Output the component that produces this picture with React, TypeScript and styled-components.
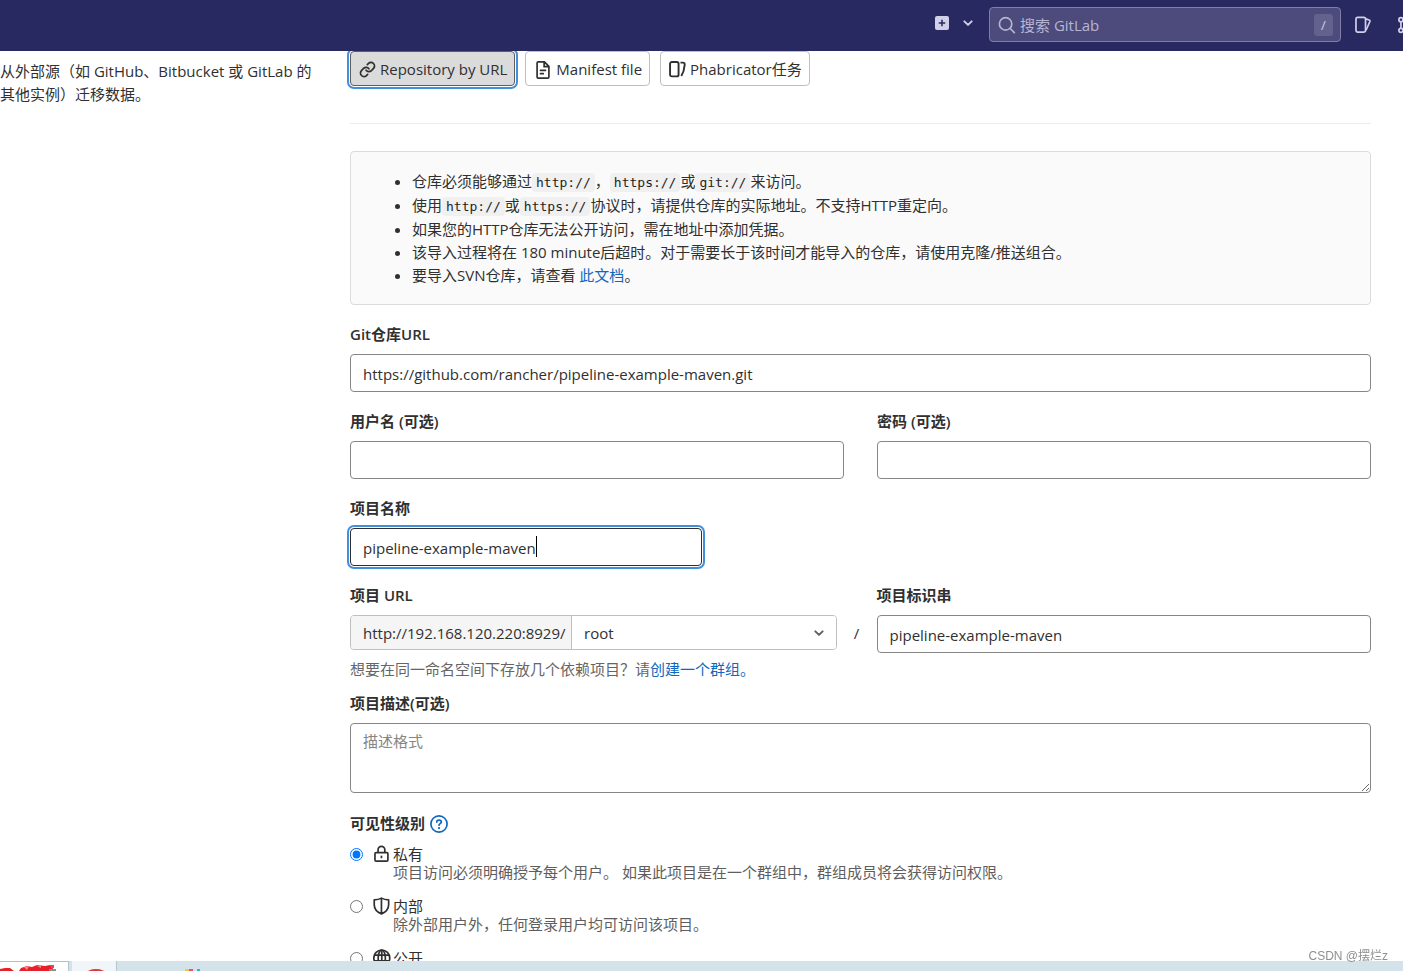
import React from "react";
import styled, { createGlobalStyle, css } from "styled-components";

const GlobalStyle = createGlobalStyle`
  *, *::before, *::after { box-sizing: border-box; }
  body {
    margin: 0;
    background: #fff;
    color: #303030;
    font: 400 15px/23px "Open Sans", "Noto Sans CJK SC", sans-serif;
  }
  button, input, select, textarea { font: inherit; color: inherit; margin: 0; }
  svg { display: block; flex: none; }
`;

const Page = styled.div`
  display: flex;
  flex-direction: column;
  height: 100vh;
  overflow: hidden;
`;

/* ---------- top bar ---------- */

const TopBar = styled.header`
  flex: none;
  display: flex;
  align-items: center;
  justify-content: flex-end;
  height: 51px;
  padding-bottom: 2px;
  overflow: hidden;
  background: #292961;
  color: #d1d0e8;
`;

const NavButton = styled.button<{ $gap?: number }>`
  display: flex;
  align-items: center;
  gap: 9px;
  margin-right: ${(p) => p.$gap ?? 0}px;
  padding: 0;
  border: 0;
  background: none;
  color: #d1d0e8;
`;

const CreateButton = styled(NavButton)`
  padding-bottom: 4px;
`;

const SearchBox = styled.label`
  display: flex;
  align-items: center;
  width: 352px;
  height: 35px;
  margin-right: 13px;
  padding: 0 7px 0 8px;
  border: 1px solid #7f7ea9;
  border-radius: 4px;
  background: #4c4b7c;
  color: #b6b5d3;
`;

const SearchInput = styled.input`
  flex: 1;
  min-width: 0;
  padding: 1px 4px 0;
  border: 0;
  outline: 0;
  background: none;
  &::placeholder { color: #b6b5d3; opacity: 1; }
`;

const Shortcut = styled.kbd`
  width: 19px;
  border-radius: 3px;
  background: #63628f;
  color: #d1d0e8;
  font: 13px/22px "Open Sans", sans-serif;
  text-align: center;
`;

const ClippedNav = styled(NavButton)`
  flex: none;
  margin-right: -12px;
`;

/* ---------- page body ---------- */

const Main = styled.main`
  flex: 1;
  min-height: 0;
  display: grid;
  grid-template-columns: 318px minmax(0, 1fr);
  column-gap: 32px;
  padding-right: 32px;
  overflow: hidden;
`;

const Intro = styled.p`
  margin: 9px 0 0;
`;

const Form = styled.form`
  display: flex;
  flex-direction: column;
`;

const SourceButtons = styled.div`
  display: flex;
  gap: 10px;
  padding-bottom: 37px;
  border-bottom: 1px solid #ececec;
`;

const focusRing = css`
  box-shadow: 0 0 0 1px #fff, 0 0 0 3px #428fdc;
`;

const SourceButton = styled.button<{ $selected?: boolean }>`
  display: flex;
  align-items: center;
  gap: 4px;
  height: 35px;
  padding: 2px 7px 0 8px;
  border: 1px solid #bfbfbf;
  border-radius: 4px;
  background: #fff;
  white-space: nowrap;
  ${(p) =>
    p.$selected &&
    css`
      border-color: #5e5e5e;
      background: #dbdbdb;
      ${focusRing}
    `}
`;

const Notice = styled.section`
  margin-top: 27px;
  padding: 18px 18px 17px;
  border: 1px solid #dbdbdb;
  border-radius: 4px;
  background: #fafafa;
`;

const NoticeList = styled.ul`
  margin: 0;
  padding-left: 43px;
`;

const NoticeItem = styled.li<{ $withCode?: boolean }>`
  padding-bottom: ${(p) => (p.$withCode ? 1 : 0)}px;
`;

const Code = styled.code`
  padding: 2px 4px;
  border-radius: 4px;
  background: #f0f0f0;
  color: #1f1f1f;
  font: 13px "DejaVu Sans Mono", monospace;
`;

const Link = styled.a`
  color: #1068bf;
  text-decoration: none;
`;

const Field = styled.div`
  display: flex;
  flex-direction: column;
  gap: 8px;
  min-width: 0;
  margin-top: 18px;
`;

const Label = styled.label`
  font-weight: 600;
`;

const TextInput = styled.input<{ $focused?: boolean }>`
  width: 100%;
  height: 38px;
  padding: 1px 12px 0;
  border: 1px solid #868686;
  border-radius: 4px;
  outline: 0;
  background: #fff;
  ${(p) =>
    p.$focused &&
    css`
      border-color: #303030;
      ${focusRing}
    `}
`;

const Credentials = styled.div`
  display: grid;
  grid-template-columns: 1fr 1fr;
  column-gap: 33px;
`;

const NameBox = styled.div`
  position: relative;
  width: 352px;
`;

const Caret = styled.span`
  position: absolute;
  top: 8px;
  left: 186px;
  width: 1px;
  height: 21px;
  background: #000;
`;

const PathRow = styled.div`
  display: flex;
  align-items: flex-start;
`;

const NamespaceField = styled(Field)`
  flex: 1;
`;

const SlugField = styled(Field)`
  flex: 0 0 calc(50% - 16px);
`;

const Slash = styled.span`
  width: 40px;
  padding-top: 56px;
  text-align: center;
`;

const InputGroup = styled.div`
  display: flex;
  height: 35px;
  border: 1px solid #bfbfbf;
  border-radius: 4px;
  overflow: hidden;
`;

const Prefix = styled.span`
  flex: none;
  width: 221px;
  padding: 6px 0 0 12px;
  border-right: 1px solid #bfbfbf;
  background: #f5f5f5;
`;

const SelectBox = styled.div`
  position: relative;
  flex: 1;
  display: flex;
`;

const Select = styled.select`
  flex: 1;
  appearance: none;
  padding: 2px 12px 0;
  border: 0;
  outline: 0;
  background: #fff;
`;

const SelectArrow = styled.span`
  position: absolute;
  top: 8px;
  right: 8px;
  pointer-events: none;
  color: #5e5e5e;
`;

const Hint = styled.p`
  margin: 5px 0 -7px;
  color: #666;
`;

const Description = styled.textarea`
  display: block;
  height: 70px;
  padding: 6px 12px;
  border: 1px solid #868686;
  border-radius: 4px;
  outline: 0;
  resize: vertical;
  &::placeholder { color: #868686; opacity: 1; }
`;

const Visibility = styled.fieldset`
  min-width: 0;
  margin: 19px 0 0;
  padding: 0;
  border: 0;
`;

const Legend = styled.legend`
  display: flex;
  align-items: center;
  gap: 5px;
  margin-bottom: 10px;
  padding: 0;
  font-weight: 600;
`;

const Option = styled.label`
  display: grid;
  grid-template-columns: 21px 18px 1fr;
  column-gap: 2px;
  align-items: center;
  margin-bottom: 16px;
  line-height: 18px;
`;

const Radio = styled.input`
  width: 13px;
  height: 13px;
  accent-color: #0075ff;
`;

const OptionHelp = styled.span`
  grid-column: 3;
  color: #5e5e5e;
`;

/* ---------- desktop strip ---------- */

const Taskbar = styled.footer`
  flex: none;
  display: flex;
  gap: 3px;
  height: 10px;
  overflow: hidden;
  background: #d4e2e9;
`;

const TaskTab = styled.div<{ $width: number; $active?: boolean }>`
  width: ${(p) => p.$width}px;
  border-right: 1px solid #b4c4cc;
  border-top: ${(p) => (p.$active ? "1px solid #bbb" : "0")};
  background: ${(p) => (p.$active ? "#fff" : "#f0f5fa")};
`;

const Watermark = styled.span`
  position: fixed;
  right: 15px;
  bottom: 6px;
  color: #8f8f8f;
  font: 12px/18px "Liberation Sans", "Noto Sans CJK SC", sans-serif;
`;

/* ---------- icons ---------- */

type IconProps = { size?: number; grid?: number; weight?: number; children: React.ReactNode };

const Icon = ({ size = 18, grid = 16, weight = 1.5, children }: IconProps) => (
  <svg
    width={size}
    height={size}
    viewBox={`0 0 ${grid} ${grid}`}
    fill="none"
    stroke="currentColor"
    strokeWidth={weight}
    aria-hidden="true"
  >
    {children}
  </svg>
);

const LinkIcon = () => (
  <Icon size={17} grid={24} weight={2.4}>
    <path
      strokeLinecap="round"
      d="M10 13a5 5 0 0 0 7.540.540l3-3a5 5 0 0 0-7.070-7.070l-1.720 1.710M14 11a5 5 0 0 0-7.540-.540l-3 3a5 5 0 0 0 7.070 7.070l1.710-1.710"
    />
  </Icon>
);

const DocumentIcon = () => (
  <Icon>
    <path d="M2.750 1.750a1 1 0 0 1 1-1h5.500l4 4v9.500a1 1 0 0 1-1 1h-8.500a1 1 0 0 1-1-1zM9 1v4h4" />
    <path strokeLinecap="round" d="M5.750 8.250h4.500M5.750 11.250h2.500" />
  </Icon>
);

const IssuesIcon = () => (
  <Icon>
    <rect x="1.750" y="1.250" width="8.500" height="13" rx="1.500" />
    <path strokeLinecap="round" d="m10.500 2.600 3 1a1 1 0 0 1 .650 1.300L11 12" />
  </Icon>
);

const PhabricatorIcon = () => (
  <Icon size={17} weight={1.800}>
    <rect x="1" y="1" width="8" height="13.500" rx="1.600" />
    <path d="M10.800 1.500h2.200c1.300 0 1.900.700 1.800 1.900-.3 3.600-1.100 7.400-3.200 10.800" />
  </Icon>
);

const PlusSquareIcon = () => (
  <Icon size={16}>
    <rect x="1" y="1" width="14" height="14" rx="2" fill="currentColor" stroke="none" />
    <path stroke="#292961" d="M8 4.750v6.500M4.750 8h6.500" />
  </Icon>
);

const ChevronIcon = () => (
  <Icon weight={1.700}>
    <path strokeLinecap="round" strokeLinejoin="round" d="M4.750 6.500 8 9.700l3.250-3.200" />
  </Icon>
);

const SearchIcon = () => (
  <Icon>
    <circle cx="6.750" cy="7" r="5.500" />
    <path strokeLinecap="round" d="m10.900 11.100 3.600 3.600" />
  </Icon>
);

const MergeIcon = () => (
  <Icon>
    <circle cx="3.500" cy="3.250" r="1.800" />
    <circle cx="3.500" cy="12.750" r="1.800" />
    <circle cx="12.500" cy="12.750" r="1.800" />
    <path d="M3.500 5v6M12.500 11V6a2 2 0 0 0-2-2H8M10 2 8 4l2 2" />
  </Icon>
);

const HelpIcon = () => (
  <Icon>
    <circle cx="8" cy="8" r="7.200" />
    <path
      strokeLinecap="round"
      d="M6 6.300C6 5.100 6.900 4.500 8 4.500s2.100.7 2.100 1.800c0 1.300-2.100 1.500-2.100 2.700"
    />
    <circle cx="8" cy="11.600" r="1" fill="currentColor" stroke="none" />
  </Icon>
);

const LockIcon = () => (
  <Icon>
    <path d="M1.750 7.750a1 1 0 0 1 1-1h9.500a1 1 0 0 1 1 1v5.500a1 1 0 0 1-1 1h-9.500a1 1 0 0 1-1-1zM4.500 6.500V4.200a3 3 0 0 1 6 0v2.300" />
    <path d="M7.500 9.500v2.250" />
  </Icon>
);

const ShieldIcon = () => (
  <Icon>
    <path
      strokeLinejoin="round"
      d="M7.500 1c-1.800 1-3.800 1.500-6.400 1.600v4.200C1.100 10.600 3.600 13.300 7.500 15c3.900-1.700 6.400-4.400 6.400-8.200V2.600C11.300 2.500 9.300 2 7.500 1zM7.500 1v14"
    />
  </Icon>
);

const EarthIcon = () => (
  <Icon>
    <circle cx="7.800" cy="8" r="7.100" />
    <ellipse cx="7.800" cy="8" rx="3.200" ry="7.100" />
    <path d="M1.300 5.500h13M1.300 10.500h13M7.800 1v14" />
  </Icon>
);

const VISIBILITY = [
  {
    value: "private",
    title: "私有",
    help: "项目访问必须明确授予每个用户。 如果此项目是在一个群组中，群组成员将会获得访问权限。",
    icon: <LockIcon />,
  },
  {
    value: "internal",
    title: "内部",
    help: "除外部用户外，任何登录用户均可访问该项目。",
    icon: <ShieldIcon />,
  },
  { value: "public", title: "公开", help: "", icon: <EarthIcon /> },
];

export default function App() {
  return (
    <>
      <GlobalStyle />
      <Page>
        <TopBar>
          <CreateButton type="button" $gap={12} aria-label="新建">
            <PlusSquareIcon />
            <ChevronIcon />
          </CreateButton>
          <SearchBox>
            <SearchIcon />
            <SearchInput type="text" placeholder="搜索 GitLab" aria-label="搜索 GitLab" />
            <Shortcut>/</Shortcut>
          </SearchBox>
          <NavButton type="button" $gap={25} aria-label="议题">
            <IssuesIcon />
          </NavButton>
          <ClippedNav type="button" aria-label="合并请求">
            <MergeIcon />
          </ClippedNav>
        </TopBar>

        <Main>
          <Intro>从外部源（如 GitHub、Bitbucket 或 GitLab 的其他实例）迁移数据。</Intro>

          <Form>
            <SourceButtons>
              <SourceButton type="button" $selected>
                <LinkIcon />
                Repository by URL
              </SourceButton>
              <SourceButton type="button">
                <DocumentIcon />
                Manifest file
              </SourceButton>
              <SourceButton type="button">
                <PhabricatorIcon />
                Phabricator任务
              </SourceButton>
            </SourceButtons>

            <Notice>
              <NoticeList>
                <NoticeItem $withCode>
                  仓库必须能够通过<Code>http://</Code>，<Code>https://</Code>或<Code>git://</Code>来访问。
                </NoticeItem>
                <NoticeItem $withCode>
                  使用<Code>http://</Code>或<Code>https://</Code>协议时，请提供仓库的实际地址。不支持HTTP重定向。
                </NoticeItem>
                <NoticeItem>如果您的HTTP仓库无法公开访问，需在地址中添加凭据。</NoticeItem>
                <NoticeItem>
                  该导入过程将在 180 minute后超时。对于需要长于该时间才能导入的仓库，请使用克隆/推送组合。
                </NoticeItem>
                <NoticeItem>
                  要导入SVN仓库，请查看 <Link href="#svn">此文档</Link>。
                </NoticeItem>
              </NoticeList>
            </Notice>

            <Field>
              <Label htmlFor="repo-url">Git仓库URL</Label>
              <TextInput id="repo-url" defaultValue="https://github.com/rancher/pipeline-example-maven.git" />
            </Field>

            <Credentials>
              <Field>
                <Label htmlFor="username">用户名 (可选)</Label>
                <TextInput id="username" />
              </Field>
              <Field>
                <Label htmlFor="password">密码 (可选)</Label>
                <TextInput id="password" type="password" />
              </Field>
            </Credentials>

            <Field>
              <Label htmlFor="name">项目名称</Label>
              <NameBox>
                <TextInput id="name" defaultValue="pipeline-example-maven" $focused />
                <Caret />
              </NameBox>
            </Field>

            <PathRow>
              <NamespaceField>
                <Label htmlFor="namespace">项目 URL</Label>
                <InputGroup>
                  <Prefix>http://192.168.120.220:8929/</Prefix>
                  <SelectBox>
                    <Select id="namespace" defaultValue="root">
                      <option>root</option>
                    </Select>
                    <SelectArrow>
                      <ChevronIcon />
                    </SelectArrow>
                  </SelectBox>
                </InputGroup>
              </NamespaceField>
              <Slash>/</Slash>
              <SlugField>
                <Label htmlFor="slug">项目标识串</Label>
                <TextInput id="slug" defaultValue="pipeline-example-maven" />
              </SlugField>
            </PathRow>
            <Hint>
              想要在同一命名空间下存放几个依赖项目？请<Link href="#group">创建一个群组。</Link>
            </Hint>

            <Field>
              <Label htmlFor="description">项目描述(可选)</Label>
              <Description id="description" placeholder="描述格式" />
            </Field>

            <Visibility>
              <Legend>
                可见性级别
                <Link href="#visibility" aria-label="帮助">
                  <HelpIcon />
                </Link>
              </Legend>
              {VISIBILITY.map((v) => (
                <Option key={v.value}>
                  <Radio type="radio" name="visibility" value={v.value} defaultChecked={v.value === "private"} />
                  {v.icon}
                  <span>{v.title}</span>
                  {v.help && <OptionHelp>{v.help}</OptionHelp>}
                </Option>
              ))}
            </Visibility>
          </Form>
        </Main>

        <Taskbar>
          <TaskTab $width={69} $active>
            <svg width="60" height="9" viewBox="0 0 60 9" aria-hidden="true">
              <path fill="#e8202a" d="M0 7l5-1 5 0 4 3H0zM19 9l2-3 6-2 5 1 5-2 8 1 5-1 4 2-3 4z" />
              <path fill="#f58a92" d="m24 5 5-1-2 4zM37 4l4-1v3z" />
              <path fill="#d94a6a" d="M51 3h3v3h-3z" />
              <path fill="#8c8c8c" d="M49 7h7v2h-7z" />
            </svg>
          </TaskTab>
          <TaskTab $width={45}>
            <svg width="44" height="10" viewBox="0 0 44 10" aria-hidden="true">
              <ellipse cx="24" cy="13" rx="10" ry="5" fill="#e5383b" />
            </svg>
          </TaskTab>
          <svg width="90" height="10" viewBox="0 0 90 10" aria-hidden="true">
            <path fill="#f7c548" d="M65 8h4v2h-4z" />
            <path fill="#f0506e" d="M69 8h4v2h-4z" />
            <path fill="#25b7f0" d="M77 8h3v2h-3z" />
          </svg>
        </Taskbar>
        <Watermark>CSDN @摆烂z</Watermark>
      </Page>
    </>
  );
}
